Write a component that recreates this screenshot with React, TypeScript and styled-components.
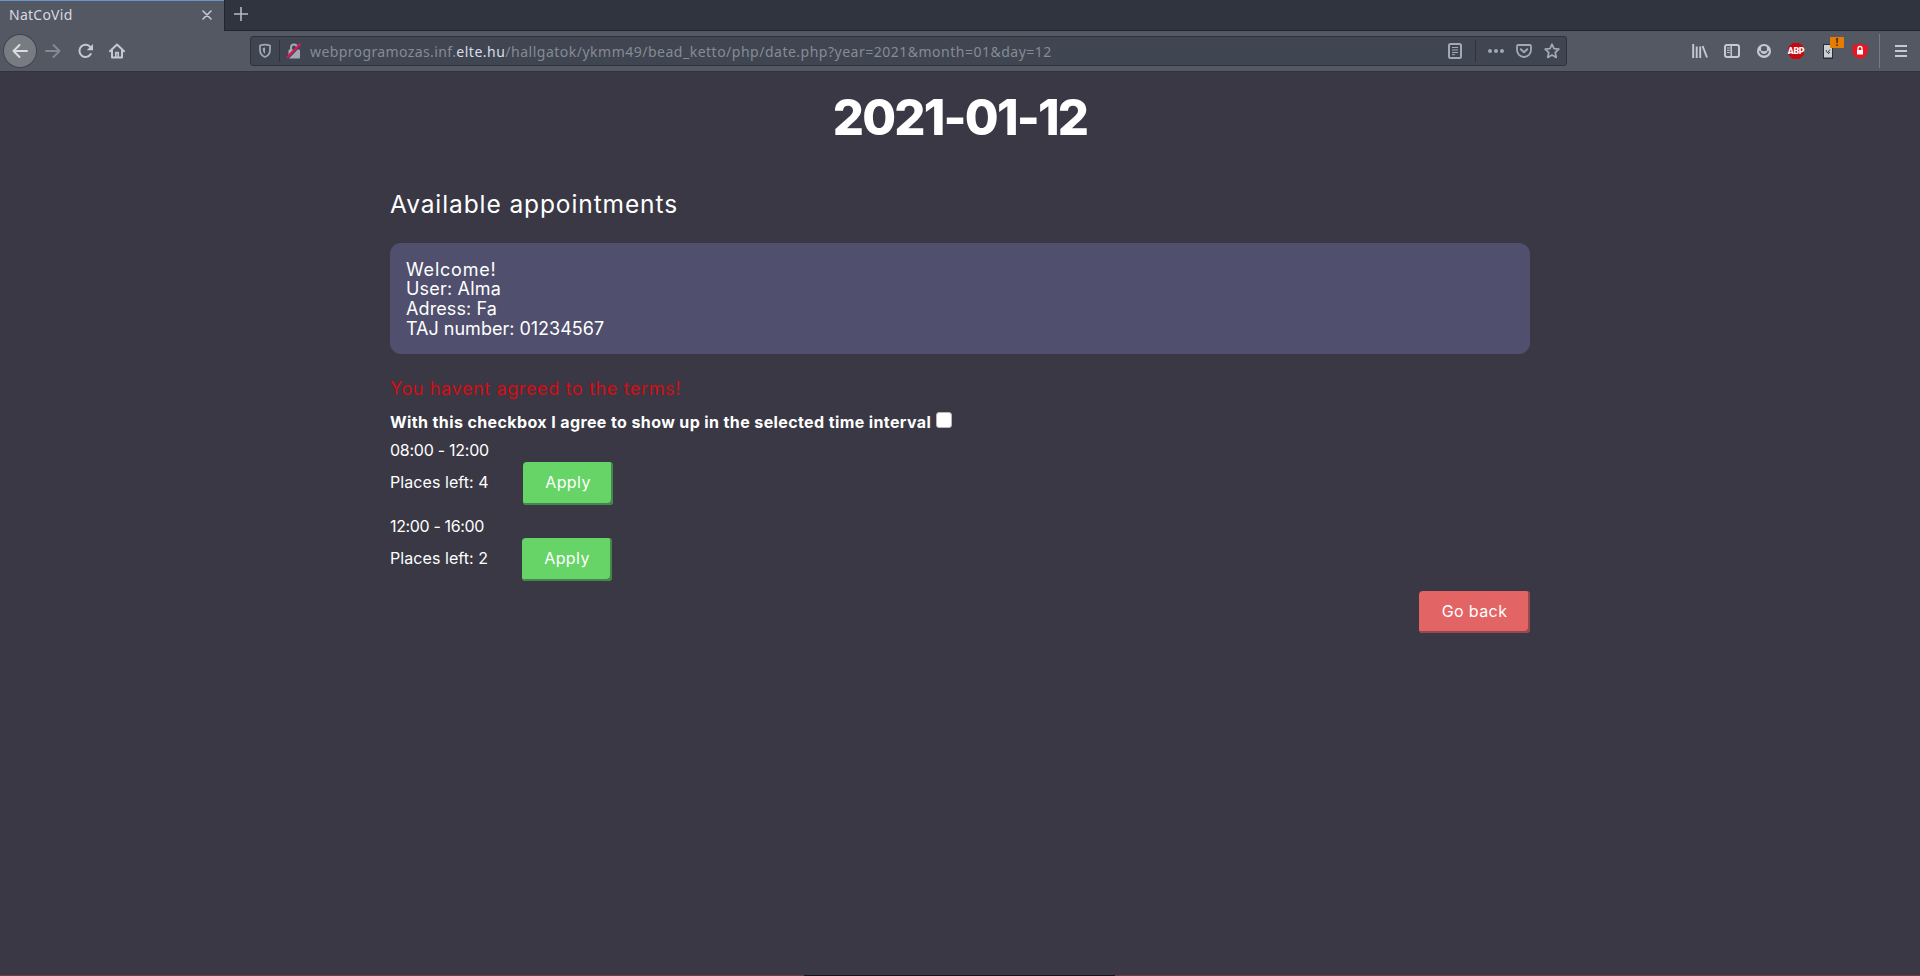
import React from 'react';
import styled, { createGlobalStyle } from 'styled-components';

const GlobalStyle = createGlobalStyle`
  * { box-sizing: border-box; }
  body { margin: 0; background: #393844; overflow: hidden; }
  svg { display: block; flex: none; }
`;

const Window = styled.div`
  display: flex;
  flex-direction: column;
  width: 1920px;
  height: 976px;
  background: #393844;
  color: #fff;
  font-family: Inter, sans-serif;
`;

/* Browser chrome */
const TabBar = styled.div`
  display: flex;
  height: 31px;
  flex: none;
  background: #545862;
`;

const Tab = styled.div`
  display: flex;
  align-items: center;
  justify-content: space-between;
  width: 224px;
  padding: 0 12px 3px 9px;
  border-top: 1px solid #6a93cc;
  color: #d3dae3;
  font: 14px "Noto Sans", sans-serif;
  letter-spacing: 0.25px;
`;

const TabStrip = styled.div`
  flex: 1;
  display: flex;
  align-items: center;
  padding: 0 0 2px 9px;
  background: #2f343f;
  border-left: 1px solid #22252e;
  border-bottom: 1px solid #22252e;
`;

const NavBar = styled.div`
  display: flex;
  align-items: center;
  height: 41px;
  flex: none;
  padding: 0 3px 0 4px;
  background: #545862;
  border-bottom: 1px solid #31343f;
`;

const NavSlot = styled.div<{ $width?: number }>`
  position: relative;
  display: flex;
  align-items: center;
  justify-content: center;
  width: ${(p) => p.$width ?? 32}px;
  height: 32px;
  flex: none;
`;

const BackButton = styled(NavSlot)`
  border-radius: 50%;
  background: #787c82;
  box-shadow: 0 0 0 1px #42454e;
`;

const UrlBar = styled.div`
  display: flex;
  align-items: center;
  width: 1317px;
  height: 30px;
  margin-left: 118px;
  border: 1px solid #2d313b;
  border-radius: 3px;
  background: #404552;
`;

const UrlDivider = styled.span<{ $gap?: number }>`
  width: 1px;
  height: 22px;
  margin-right: ${(p) => p.$gap ?? 0}px;
  background: #2d323d;
`;

const Address = styled.div`
  flex: 1;
  margin-left: 2px;
  padding-top: 1px;
  color: #868b94;
  font: 14px/20px "Noto Sans", sans-serif;
  letter-spacing: 0.5px;
  white-space: nowrap;
`;

const Subdomain = styled.span`
  letter-spacing: 0.39px;
`;

const Domain = styled.span`
  color: #d8dee8;
`;

const Toolbar = styled.div`
  display: flex;
  align-items: center;
  margin-left: auto;
`;

const ToolbarDivider = styled.span`
  width: 1px;
  height: 34px;
  margin: 0 5px 0 3px;
  background: #787b84;
`;

const Badge = styled.span`
  position: absolute;
  top: 2px;
  left: 18px;
  width: 14px;
  height: 11px;
  border-radius: 1px;
  background: #e77c05;
  color: #432805;
  font: bold 10px/11px "Noto Sans", sans-serif;
  text-align: center;
`;

/* Page */
const Page = styled.main`
  display: flex;
  flex-direction: column;
  flex: 1;
  width: 1140px;
  margin: 0 auto;
  padding-top: 16px;
`;

const Title = styled.h1`
  margin: 0;
  text-align: center;
  font-size: 49px;
  font-weight: 800;
  line-height: 60px;
  letter-spacing: -1.8px;
`;

const Subtitle = styled.h2`
  margin: 41px 0 24px;
  font-size: 24.5px;
  font-weight: 400;
  line-height: 30px;
  letter-spacing: 0.9px;
`;

const UserCard = styled.section`
  height: 111px;
  padding: 16.6px 16px 0;
  border-radius: 11px;
  background: #504f6d;
  font-size: 18px;
  line-height: 19.8px;
`;

const UserLine = styled.div<{ $tracking: number }>`
  letter-spacing: ${(p) => p.$tracking}px;
`;

const ErrorText = styled.p`
  margin: 25px 0 11px;
  color: #d60c12;
  font-size: 18px;
  line-height: 20px;
  letter-spacing: 0.62px;
`;

const Terms = styled.label`
  display: flex;
  height: 24px;
  font-size: 16px;
  font-weight: 700;
  line-height: 24px;
  letter-spacing: 0.39px;
  white-space: nowrap;
`;

const Checkbox = styled.input`
  appearance: none;
  width: 16px;
  height: 16px;
  margin: 2px 0 0 5px;
  border: 1px solid #b5b5ba;
  border-radius: 3px;
  background: #fff;
`;

const Slot = styled.section`
  margin-top: 4px;
  font-size: 16px;
  line-height: 24px;
  & + & { margin-top: 9px; }
`;

const SlotTime = styled.div<{ $tracking: number }>`
  letter-spacing: ${(p) => p.$tracking}px;
`;

const SlotRow = styled.div`
  display: flex;
  align-items: center;
  height: 43px;
`;

const Places = styled.span<{ $width: number }>`
  width: ${(p) => p.$width}px;
  margin-bottom: 3px;
  letter-spacing: 0.07px;
`;

const Button = styled.button<{ $kind: 'apply' | 'back' }>`
  width: ${(p) => (p.$kind === 'apply' ? 90 : 111)}px;
  height: ${(p) => (p.$kind === 'apply' ? 43 : 42)}px;
  padding: 0 0 ${(p) => (p.$kind === 'apply' ? 3 : 2)}px;
  border: 0;
  border-radius: 4px;
  background: ${(p) => (p.$kind === 'apply' ? '#66d466' : '#e26464')};
  box-shadow: inset -2px -2px 0 ${(p) => (p.$kind === 'apply' ? '#43884a' : '#934950')};
  color: #fff;
  font: 400 16px/24px Inter, sans-serif;
  letter-spacing: 0.4px;
`;

const Actions = styled.div`
  display: flex;
  justify-content: flex-end;
  margin-top: 10px;
`;

const BottomEdge = styled.footer`
  display: grid;
  grid-template-columns: 804px 311px 1fr;
  height: 1px;
  flex: none;
  background: #6b3f3b;
`;

const EdgeGap = styled.span`
  grid-column: 2;
  background: #15131f;
`;

const Icon = ({ w = 16, h = 16, color = '#c3c9d6', children }: { w?: number; h?: number; color?: string; children: React.ReactNode }) => (
  <svg width={w} height={h} viewBox={`0 0 ${w} ${h}`} fill="none" stroke={color} strokeWidth="2" strokeLinecap="round" strokeLinejoin="round">
    {children}
  </svg>
);

const users: [string, number][] = [
  ['Welcome!', 0.78],
  ['User: Alma', 0.2],
  ['Adress: Fa', 0.1],
  ['TAJ number: 01234567', 0],
];

const slots = [
  { time: '08:00 - 12:00', tracking: -0.26, places: 4, width: 133 },
  { time: '12:00 - 16:00', tracking: -0.36, places: 2, width: 132 },
];

export default function App() {
  return (
    <Window>
      <GlobalStyle />
      <TabBar>
        <Tab>
          NatCoVid
          <Icon w={10} h={10}><path d="M1 1l8 8M9 1l-8 8" strokeWidth="1.6" /></Icon>
        </Tab>
        <TabStrip>
          <Icon w={14} h={14} color="#b5bac4"><path d="M7 0v14M0 7h14" strokeWidth="1.6" strokeLinecap="butt" /></Icon>
        </TabStrip>
      </TabBar>
      <NavBar>
        <BackButton>
          <Icon color="#d9dce2"><path d="M15 8H1.5M7.5 2l-6 6 6 6" /></Icon>
        </BackButton>
        <NavSlot $width={34}>
          <Icon color="#858992"><path d="M1 8h13.5M8.5 2l6 6-6 6" /></Icon>
        </NavSlot>
        <NavSlot $width={31}>
          <Icon><path d="M12.8 11A6.1 6.1 0 1 1 12.4 4.2" /><path d="M15 1v6.200H8.800z" fill="#c3c9d6" stroke="none" /></Icon>
        </NavSlot>
        <NavSlot $width={31}>
          <Icon><path d="M1 8.200L8 1.500l7 6.700M3 7.500V14.500h10V7.500" /><path d="M6.800 14V9.500h2.400V14" strokeWidth="1.7" /></Icon>
        </NavSlot>
        <UrlBar>
          <NavSlot $width={28}>
            <Icon w={14} h={16} color="#a2a8b4"><path d="M2 2.500Q7 .8 12 2.500V7q0 5-5 7-5-2-5-7z" strokeWidth="1.7" /><path d="M7 4.500v6.500Q4.800 9.200 4.800 7V4.900z" fill="#a2a8b4" stroke="none" /></Icon>
          </NavSlot>
          <UrlDivider />
          <NavSlot $width={28}>
            <Icon w={16} h={16} color="#a2a8b4">
              <path d="M5 7V4.500a3 3 0 0 1 6 0V7" />
              <rect x="2.5" y="6.5" width="11.5" height="9" rx="1" fill="#a2a8b4" stroke="none" />
              <path d="M2.500 15L15 2" stroke="#404552" strokeWidth="1.5" />
              <path d="M1.500 14L14 1.200" stroke="#dd1650" strokeWidth="2.2" />
            </Icon>
          </NavSlot>
          <Address>
            <Subdomain>webprogramozas.inf.</Subdomain>
            <Domain>elte.hu</Domain>
            /hallgatok/ykmm49/bead_ketto/php/date.php?year=2021&amp;month=01&amp;day=12
          </Address>
          <NavSlot $width={40}>
            <Icon w={14} h={16} color="#a2a8b4"><rect x="1" y="1" width="12" height="14" rx="1.5" /><path d="M4 4.500h6M4 7h6M4 9.500h6M4 11.700h3" strokeWidth="1" strokeLinecap="butt" /></Icon>
          </NavSlot>
          <UrlDivider $gap={6} />
          <NavSlot $width={28}>
            <Icon color="#a2a8b4"><g fill="#a2a8b4" stroke="none"><circle cx="2" cy="8" r="2" /><circle cx="8" cy="8" r="2" /><circle cx="14" cy="8" r="2" /></g></Icon>
          </NavSlot>
          <NavSlot $width={28}>
            <Icon color="#a2a8b4"><path d="M2.200 2h11.600q1.200 0 1.200 1.200V7A7 7 0 0 1 1 7V3.200Q1 2 2.200 2z" strokeWidth="1.8" /><path d="M4.800 6.200L8 9.300l3.200-3.100" /></Icon>
          </NavSlot>
          <NavSlot $width={28}>
            <Icon color="#a2a8b4"><path d="M8 1.200l2 4.500 4.900.5-3.700 3.300 1.100 4.900L8 11.900l-4.300 2.500 1.100-4.900L1.100 6.200 6 5.700z" strokeWidth="1.7" /></Icon>
          </NavSlot>
        </UrlBar>
        <Toolbar>
          <NavSlot>
            <Icon><path d="M1.200 1v14M4.700 3.500V15M8.200 3.500V15M10.600 3L15 14.500" strokeWidth="1.9" strokeLinecap="butt" /></Icon>
          </NavSlot>
          <NavSlot>
            <Icon><rect x="1" y="2" width="14" height="12" rx="2" /><path d="M7.200 2v12" strokeWidth="1.5" /><path d="M3 5h2.800M3 7.300h2.800M3 9.600h2.800" strokeWidth="1" strokeLinecap="butt" /></Icon>
          </NavSlot>
          <NavSlot>
            <Icon w={14} h={14}>
              <circle cx="7" cy="7" r="7" fill="#c3c9d6" stroke="none" />
              <path d="M4.200 2.800Q7 1.200 9.800 2.800L10 6.500Q8.500 7.200 7 7.200T4 6.500z" fill="#545862" stroke="none" />
              <path d="M2.800 7.500Q3.600 10.700 7 10.700t4.200-3.200" stroke="#545862" strokeWidth="1.4" />
            </Icon>
          </NavSlot>
          <NavSlot>
            <svg width="18" height="16" viewBox="0 0 18 16">
              <path d="M5.500 0h7L17 4.500v7L12.500 16h-7L1 11.500v-7z" fill="#c60811" />
              <text x="9" y="11.1" fill="#fff" fontFamily="Roboto, sans-serif" fontWeight="900" fontSize="8.8" textAnchor="middle" letterSpacing="-.3">ABP</text>
            </svg>
          </NavSlot>
          <NavSlot>
            <svg width="10" height="15" viewBox="0 0 10 15">
              <path d="M0 0h10v15H0z" fill="#2b2e36" />
              <path d="M1 1h8v12.500H1z" fill="#c9d1d4" />
              <path d="M3 6l1.500 3L7 5.500M5 10l2-2" stroke="#454b53" fill="none" />
            </svg>
            <Badge>!</Badge>
          </NavSlot>
          <NavSlot>
            <svg width="16" height="16" viewBox="0 0 16 16">
              <path d="M.5 2.200Q5 2.500 8 0q3 2.500 7.500 2.200V8q0 5-7.500 8Q.5 13 .5 8z" fill="#ec1420" />
              <path d="M6 7V5.500a2 2 0 0 1 4 0V7" fill="none" stroke="#fff" strokeWidth="1.3" />
              <path d="M5 7h6v4.500H5z" fill="#fff" />
            </svg>
          </NavSlot>
          <ToolbarDivider />
          <NavSlot>
            <Icon w={12} h={14}><path d="M0 2h12M0 7h12M0 12h12" strokeLinecap="butt" /></Icon>
          </NavSlot>
        </Toolbar>
      </NavBar>
      <Page>
        <Title>2021-01-12</Title>
        <Subtitle>Available appointments</Subtitle>
        <UserCard>
          {users.map(([text, tracking]) => (
            <UserLine key={text} $tracking={tracking}>{text}</UserLine>
          ))}
        </UserCard>
        <ErrorText>You havent agreed to the terms!</ErrorText>
        <Terms>
          With this checkbox I agree to show up in the selected time interval
          <Checkbox type="checkbox" />
        </Terms>
        {slots.map((slot) => (
          <Slot key={slot.time}>
            <SlotTime $tracking={slot.tracking}>{slot.time}</SlotTime>
            <SlotRow>
              <Places $width={slot.width}>Places left: {slot.places}</Places>
              <Button $kind="apply">Apply</Button>
            </SlotRow>
          </Slot>
        ))}
        <Actions>
          <Button $kind="back">Go back</Button>
        </Actions>
      </Page>
      <BottomEdge><EdgeGap /></BottomEdge>
    </Window>
  );
}
